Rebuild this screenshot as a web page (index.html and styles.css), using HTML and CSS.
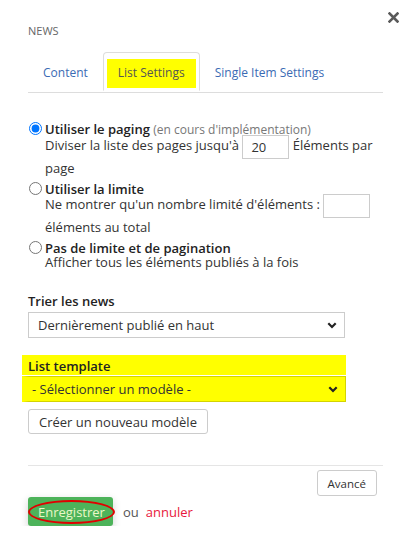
FILE: index.html
```html
<!DOCTYPE html>
<html lang="en">
<head>
    <meta charset="UTF-8">
    <meta name="viewport" content="width=device-width, initial-scale=1.0">
    <title>News</title>
    <link rel="stylesheet" href="styles.css">
</head>
<body>
<main class="dialog">
    <div class="dialog-head">
        <span class="dialog-title">NEWS</span>
        <button class="close" type="button" aria-label="Close">
            <svg width="11" height="11" viewBox="0 0 11 11"><path d="M1.5 1.5 L9.5 9.5 M9.5 1.5 L1.5 9.5" stroke="#5a5a5a" stroke-width="2.6" stroke-linecap="square"/></svg>
        </button>
    </div>

    <ul class="tabs">
        <li class="tab"><a href="#">Content</a></li>
        <li class="tab active"><a href="#"><mark>List Settings</mark></a></li>
        <li class="tab"><a href="#">Single Item Settings</a></li>
    </ul>

    <form class="settings">
        <div class="options">
            <label class="option">
                <input type="radio" name="mode" checked>
                <span class="option-body">
                    <span class="option-title">Utiliser le paging <em>(en cours d'implémentation)</em></span>
                    <span class="option-desc">Diviser la liste des pages jusqu'à <input class="num" type="text" value="20"> Éléments par page</span>
                </span>
            </label>
            <label class="option">
                <input type="radio" name="mode">
                <span class="option-body">
                    <span class="option-title">Utiliser la limite</span>
                    <span class="option-desc">Ne montrer qu'un nombre limité d'éléments : <input class="num" type="text"> éléments au total</span>
                </span>
            </label>
            <label class="option">
                <input type="radio" name="mode">
                <span class="option-body">
                    <span class="option-title">Pas de limite et de pagination</span>
                    <span class="option-desc short">Afficher tous les éléments publiés à la fois</span>
                </span>
            </label>
        </div>

        <div class="field">
            <label class="field-label">Trier les news</label>
            <div class="select">
                <span>Dernièrement publié en haut</span>
                <svg width="10" height="7" viewBox="0 0 10 7"><path d="M1.3 1.3 L5 5 L8.7 1.3" fill="none" stroke="#222" stroke-width="2.2"/></svg>
            </div>
        </div>

        <div class="field marked">
            <label class="field-label">List template</label>
            <div class="select">
                <span>- Sélectionner un modèle -</span>
                <svg width="10" height="7" viewBox="0 0 10 7"><path d="M1.3 1.3 L5 5 L8.7 1.3" fill="none" stroke="#222" stroke-width="2.2"/></svg>
            </div>
            <button class="btn" type="button">Créer un nouveau modèle</button>
        </div>

        <div class="footer">
            <div class="footer-top">
                <button class="btn btn-small" type="button">Avancé</button>
            </div>
            <div class="actions">
                <button class="btn-save" type="button"><span class="ring">Enregistrer</span></button>
                <span class="or">ou</span>
                <a class="cancel" href="#">annuler</a>
            </div>
        </div>
    </form>
</main>
</body>
</html>
```

FILE: styles.css
```css
body{
    margin: 0;
    background: #fff;
    font-family: 'Open Sans', 'Noto Sans', sans-serif;
    font-size: 13px;
    color: #333;
}
.dialog{
    padding: 12px 28px 0 28px;
}
.dialog-head{
    display: flex;
    justify-content: space-between;
    align-items: flex-start;
}
.dialog-title{
    margin-top: 11px;
    font-size: 11px;
    color: #666;
}
.close{
    border: 0;
    background: none;
    padding: 0;
    margin-right: -16px;
    width: 11px;
    height: 11px;
    cursor: pointer;
}
.close svg{
    display: block;
}

/* tabs */
.tabs{
    display: flex;
    list-style: none;
    margin: 14px 0 0 0;
    padding: 0;
    border-bottom: 1px solid #ddd;
    font-size: 12px;
}
.tab{
    margin-bottom: -1px;
}
.tab a{
    display: block;
    padding: 11px 14px 10px 14px;
    line-height: 18px;
    color: #3b6bb4;
    text-decoration: none;
    border: 1px solid transparent;
    border-radius: 4px 4px 0 0;
}
.tab.active a{
    padding: 6px 3px 2px 3px;
    color: #555;
    border-color: #ddd;
    border-bottom-color: #fff;
    background: #fff;
}
.tab mark{
    display: block;
    background: #ffff00;
    color: #555;
    padding: 5px 11px 6px 11px;
}

/* paging options */
.settings{
    padding-top: 28px;
}
.option{
    display: flex;
    align-items: flex-start;
    line-height: 16px;
}
.option input[type=radio]{
    margin: 1px 3px 0 1px;
    width: 13px;
    height: 13px;
    flex: none;
}
.option-body{
    display: block;
    padding-bottom: 1px;
}
.option-title{
    display: block;
    font-weight: 600;
    color: #222;
}
.option-title em{
    font-style: normal;
    font-weight: 400;
    font-size: 12px;
    color: #777;
}
.option-desc{
    display: block;
    color: #333;
    line-height: 23px;
    margin-top: -4px;
}
.option-desc.short{
    line-height: 16px;
    margin-top: -2px;
}
.num{
    width: 47px;
    height: 24px;
    box-sizing: border-box;
    border: 1px solid #ccc;
    margin: -2px 0;
    padding: 2px 8px;
    font-family: inherit;
    font-size: 13px;
    color: #333;
    vertical-align: middle;
}

/* selects */
.field{
    margin-top: 21px;
}
.field-label{
    display: block;
    font-weight: 600;
    color: #222;
    line-height: 18px;
    margin-bottom: 2px;
}
.select{
    display: flex;
    justify-content: space-between;
    align-items: center;
    width: 317px;
    height: 26px;
    box-sizing: border-box;
    border: 1px solid #ccc;
    padding: 0 7px 0 9px;
    color: #333;
}
.marked{
    margin-left: -6px;
    padding-left: 6px;
    width: 318px;
    margin-top: 17px;
}
.marked .field-label,
.marked .select{
    background: #ffff00;
}
.marked .select{
    border-color: #d4d400;
}
.marked .field-label{
    margin-left: -6px;
    padding-left: 6px;
    margin-bottom: 1px;
    padding-top: 2px;
}
.marked .select{
    margin-left: -6px;
    border-left-width: 7px;
    border-left-color: #ffff00;
    width: 324px;
    padding-left: 3px;
}
.btn{
    border: 1px solid #ccc;
    border-radius: 3px;
    background: #fff;
    padding: 0 10px;
    height: 25px;
    font-family: inherit;
    font-size: 13px;
    color: #333;
    margin-top: 7px;
}

/* footer */
.footer{
    margin-top: 31px;
    border-top: 1px solid #e5e5e5;
}
.footer-top{
    display: flex;
    justify-content: flex-end;
    padding-right: 6px;
}
.footer-top .btn-small{
    margin-top: 4px;
    height: 26px;
    font-size: 11.5px;
    padding: 0 10px;
}
.actions{
    display: flex;
    align-items: center;
    gap: 7px;
    margin-top: 1px;
}
.btn-save{
    background: #4db35a;
    border: 0;
    border-radius: 3px;
    height: 29px;
    width: 85px;
    padding: 0;
    box-shadow: 0 3px 8px rgba(0,0,0,0.18);
    font-family: inherit;
    font-size: 13px;
    color: #eaf7c8;
}
.ring{
    display: inline-block;
    border: 2px solid #e00000;
    border-radius: 50%;
    padding: 1px 8px;
}
.or{
    color: #555;
    margin-left: 3px;
}
.cancel{
    color: #e8173d;
    text-decoration: none;
}
```
